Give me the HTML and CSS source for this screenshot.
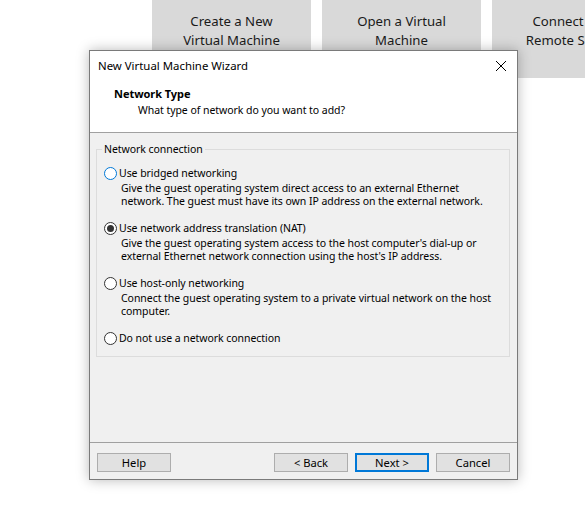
FILE: index.html
```html
<!DOCTYPE html>
<html>
<head>
<meta charset="utf-8">
<link rel="stylesheet" href="styles.css">
</head>
<body>
<div class="desktop">
  <div class="tiles">
    <div class="tile">Create a New<br>Virtual Machine</div>
    <div class="tile">Open a Virtual<br>Machine</div>
    <div class="tile">Connect to a<br>Remote Server</div>
  </div>

  <div class="dialog">
    <div class="titlebar">
      <span class="title">New Virtual Machine Wizard</span>
      <svg class="close" width="12" height="12" viewBox="0 0 12 12"><path d="M1 1 L11 11 M11 1 L1 11" stroke="#000" stroke-width="1" fill="none"/></svg>
    </div>
    <div class="header">
      <div class="h-title">Network Type</div>
      <div class="h-sub">What type of network do you want to add?</div>
    </div>
    <div class="body">
      <fieldset class="group">
        <legend>Network connection</legend>
        <div class="option first">
          <div class="opt-label"><span class="radio focus"></span>Use bridged networking</div>
          <div class="opt-desc"><div>Give the guest operating system direct access to an external Ethernet</div><div>network. The guest must have its own IP address on the external network.</div></div>
        </div>
        <div class="option">
          <div class="opt-label"><span class="radio checked"></span>Use network address translation (NAT)</div>
          <div class="opt-desc"><div>Give the guest operating system access to the host computer's dial-up or</div><div>external Ethernet network connection using the host's IP address.</div></div>
        </div>
        <div class="option">
          <div class="opt-label"><span class="radio"></span>Use host-only networking</div>
          <div class="opt-desc"><div>Connect the guest operating system to a private virtual network on the host</div><div>computer.</div></div>
        </div>
        <div class="option last">
          <div class="opt-label"><span class="radio"></span>Do not use a network connection</div>
        </div>
      </fieldset>
    </div>
    <div class="footer">
      <button class="btn">Help</button>
      <div class="spacer"></div>
      <button class="btn">&lt; Back</button>
      <button class="btn default">Next &gt;</button>
      <button class="btn">Cancel</button>
    </div>
  </div>
</div>
</body>
</html>
```

FILE: styles.css
```css
* { box-sizing: border-box; }
html, body { margin: 0; padding: 0; background: #fff; }
body {
  font-family: "Noto Sans", "Open Sans", "Liberation Sans", sans-serif;
  color: #000;
}
.desktop {
  position: relative;
  width: 585px;
  height: 529px;
  overflow: hidden;
  background: #fff;
}
.tiles {
  display: flex;
  gap: 11px;
  padding-left: 152px;
}
.tile {
  flex: 0 0 159px;
  height: 78px;
  background: #d9d9d9;
  color: #1a1a1a;
  font-size: 13.2px;
  line-height: 19px;
  text-align: center;
  padding-top: 12px;
  white-space: nowrap;
  overflow: hidden;
}
.dialog {
  position: absolute;
  left: 89px;
  top: 50px;
  width: 429px;
  height: 430px;
  border: 1px solid #7a7a7a;
  background: #f0f0f0;
  box-shadow: 0 0 12px rgba(0,0,0,0.28);
  display: flex;
  flex-direction: column;
  font-size: 10.5px;
  letter-spacing: -0.05px;
}
.titlebar {
  height: 30px;
  background: #fff;
  display: flex;
  align-items: center;
  padding-left: 8px;
  padding-right: 10px;
  padding-bottom: 1px;
  justify-content: space-between;
}
.title { font-size: 11.4px; letter-spacing: 0; }
.close { display: block; }
.header {
  background: #fff;
  height: 52px;
  padding: 5px 0 0 24px;
  border-bottom: 1px solid #a0a0a0;
  white-space: nowrap;
}
.h-title { font-weight: bold; line-height: 16px; font-size: 11px; }
.h-sub { padding-left: 24px; line-height: 16px; }
.body {
  flex: 1;
  padding: 9px 7px 0 6px;
}
.group {
  margin: 0;
  min-width: 0;
  border: 1px solid #dcdcdc;
  padding: 7px 6px 9px 7px;
  height: 215px;
  white-space: nowrap;
}
.group legend {
  padding: 0 2px;
  margin-left: -2px;
  line-height: 14px;
}
.option { margin-bottom: 12px; }
.option.last { margin-bottom: 0; }
.opt-label {
  display: flex;
  align-items: center;
  height: 17px;
  line-height: 17px;
}
.option.first .opt-label {
  height: 19px;
  padding-top: 1px;
}
.radio {
  width: 13px;
  height: 13px;
  border: 1px solid #333;
  border-radius: 50%;
  background: #fff;
  margin-right: 2px;
  flex: 0 0 13px;
  position: relative;
}
.radio.focus { border-color: #0078d7; }
.radio.checked::after {
  content: "";
  position: absolute;
  left: 2px; top: 2px;
  width: 7px; height: 7px;
  border-radius: 50%;
  background: #333;
}
.opt-desc {
  padding-left: 17px;
}
.opt-desc div {
  height: 13px;
  line-height: 13px;
}
.footer {
  height: 37px;
  border-top: 1px solid #a0a0a0;
  display: flex;
  align-items: flex-start;
  gap: 7px;
  padding: 10px 7px 0 7px;
}
.spacer { flex: 1; }
.btn {
  width: 74px;
  height: 19px;
  border: 1px solid #adadad;
  background: #e1e1e1;
  font-family: inherit;
  font-size: 11.2px;
  line-height: 15px;
  color: #000;
  padding: 0;
  margin: 0;
}
.btn.default { border: 2px solid #0078d7; }
```
